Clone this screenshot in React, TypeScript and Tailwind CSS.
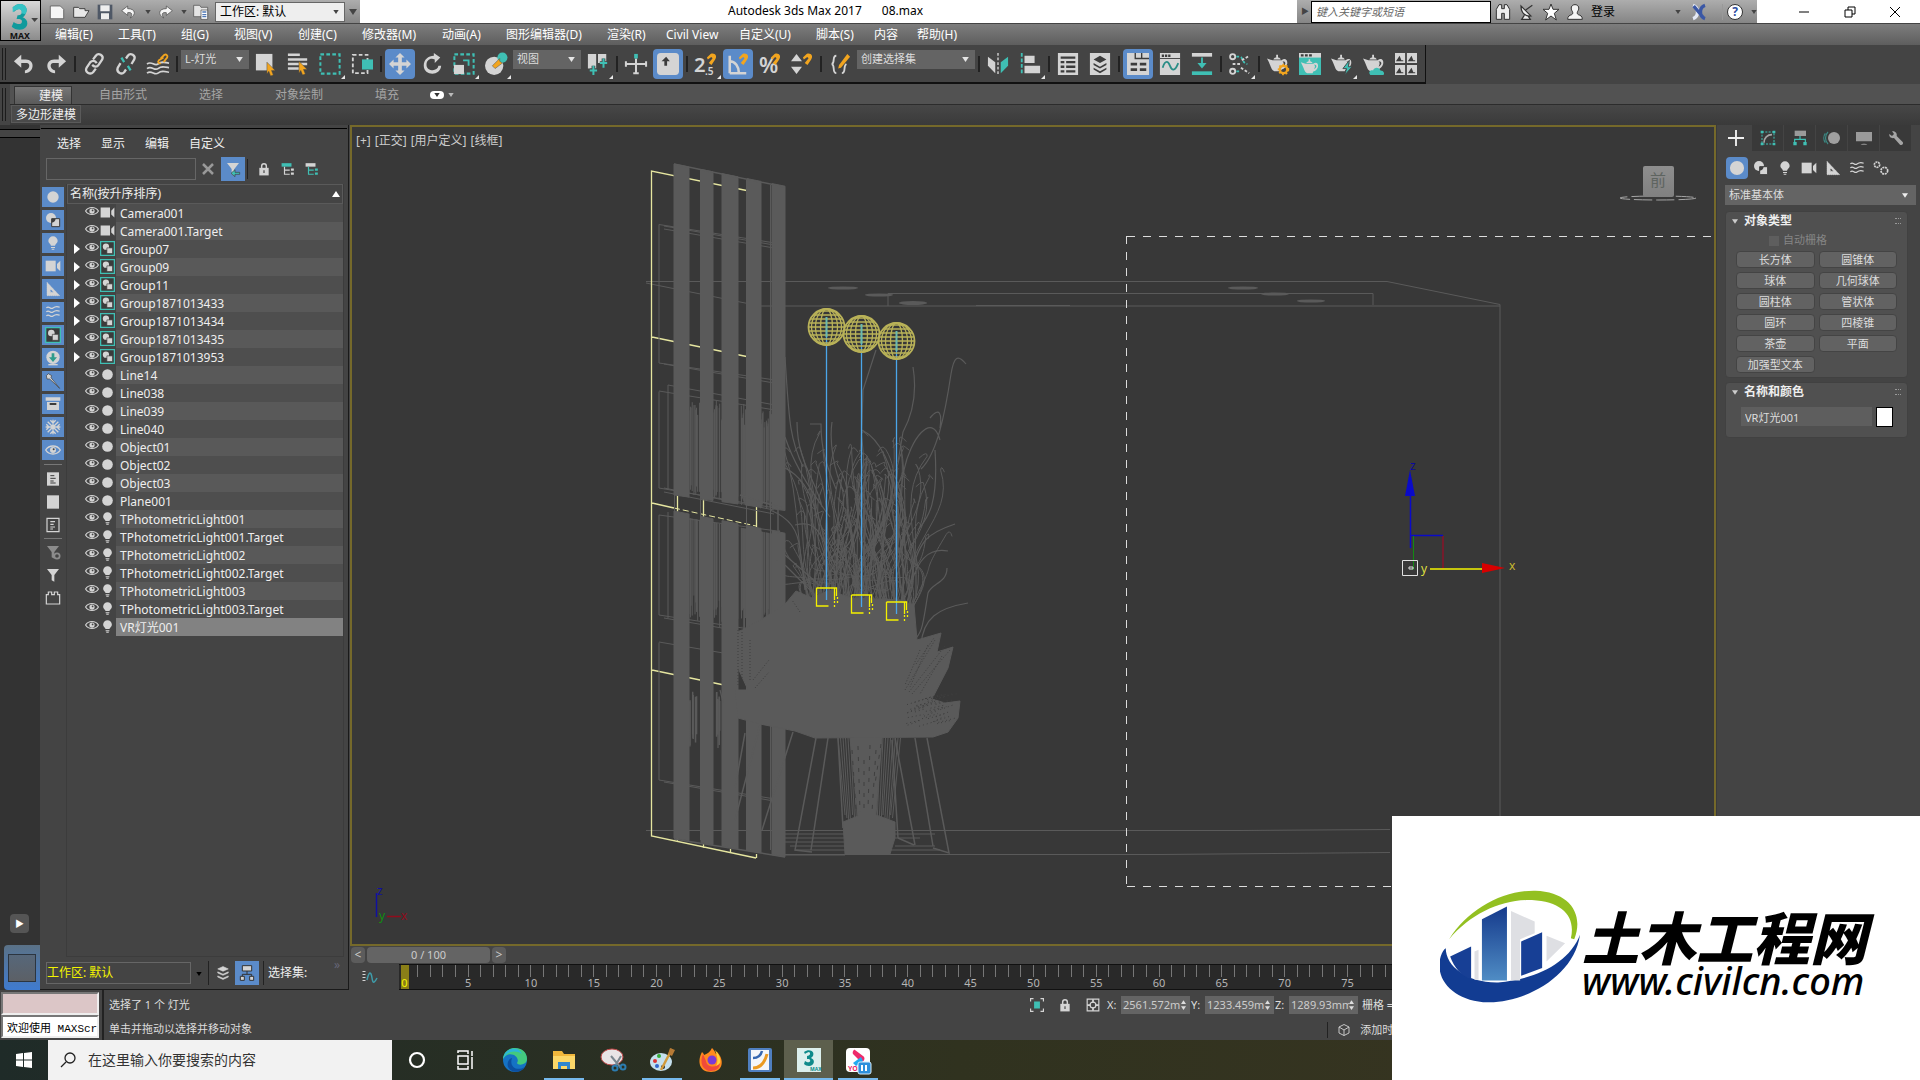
import React from 'react';

const L = '#d4d4d4';
const T = '#3fbfb4';
const O = '#f2a51f';

const bulb = <path d="M12 2a7 7 0 0 0-7 7c0 3 3 4 4 7h6c1-3 4-4 4-7a7 7 0 0 0-7-7zM9 18h6v1.500H9zM10 20.500h4V22h-4z" fill={L} />;
const camera = (
  <g fill={L}>
    <rect x="1" y="4" width="15" height="16" />
    <path d="M18 9l5-5v16l-5-5z" />
  </g>
);
const shapes = (
  <g>
    <circle cx="9" cy="9" r="7.500" fill={L} />
    <path d="M10 10h12v12H10z" fill={L} stroke="#3c3c3c" strokeWidth="1.500" />
    <path d="M10 10h6a7 7 0 0 1-6 6z" fill="#3c3c3c" />
  </g>
);
const waves = (
  <g fill="none" stroke={L} strokeWidth="1.800">
    <path d="M2 6c4-5 6 3 10 0s6-3 10-1M2 12c4-5 6 3 10 0s6-3 10-1M2 18c4-5 6 3 10 0s6-3 10-1" />
  </g>
);
const ruler = <path d="M3 2l19 20H3zM8 12v5h5z" fill={L} fillRule="evenodd" stroke={L} strokeDasharray="2 1" />;
const funnel = <path d="M3 3h18l-7 9v10l-4-2v-8z" fill={L} />;
const teapot = (
  <g>
    <path d="M0 6l6 2h10c3-3 7-1 6 4-1 3-3 5-6 6l-1 2H8c-4-2-3-5-8-14zM17 9c2 2 1 4 0 6 4-2 4-6 0-6z" fill={L} fillRule="evenodd" />
    <path d="M7 7c1-3 7-3 8 0zM10 2h2v3h-2z" fill={L} />
  </g>
);
const magnet = <path d="M13 5l4-4c4-2 8 2 5 6l-4 6-3-2 4-5c0-1-1-2-2-1l-3 2z" fill={O} />;
const lock = (
  <g>
    <rect x="4" y="10" width="16" height="13" fill={L} />
    <path d="M8 11V7a4 4 0 0 1 8 0v4" fill="none" stroke={L} strokeWidth="2.500" />
    <path d="M11 14h2v5h-2z" fill="#444" />
  </g>
);
const eye = (
  <g>
    <path d="M1 12c5-8 17-8 22 0-5 8-17 8-22 0z" fill="none" stroke={L} strokeWidth="2" />
    <circle cx="12" cy="12" r="4.500" fill={L} />
    <circle cx="13" cy="11" r="1.500" fill="#444" />
  </g>
);
const group = (
  <g>
    <path d="M1 1h22v22H1z" fill="#3b3b3b" stroke={T} strokeWidth="2" />
    <circle cx="9.500" cy="9" r="5" fill={L} />
    <path d="M11 11h9v9h-9z" fill={L} stroke="#3b3b3b" />
  </g>
);
const doc = (
  <g>
    <rect x="3" y="2" width="18" height="20" fill={L} />
    <path d="M8 7h6M8 11h8M8 15h5M8 18h8" stroke="#3c3c3c" strokeWidth="1.500" />
  </g>
);

const icons: Record<string, React.ReactNode> = {
  bulb, camera, shapes, waves, ruler, funnel, lock, eye, group, doc,
  circle: <circle cx="12" cy="12" r="8.500" fill={L} />,
  undo: <path d="M9 2L1 9l8 7v-5h6c4 0 4 7-2 8v3c11-1 11-15 1-15H9z" fill={L} />,
  redo: <path d="M15 2l8 7-8 7v-5H9c-4 0-4 7 2 8v3C0 21 0 7 10 7h5z" fill={L} />,
  link: (
    <g fill="none" stroke={L} strokeWidth="2.500">
      <path d="M11 7l3-4c3-4 9 0 7 4l-4 6c-2 3-5 2-7 0M14 17l-3 4c-3 3-10 0-7-5l4-6c2-2 5-2 7 1" />
    </g>
  ),
  unlink: (
    <g fill="none" strokeWidth="2.500">
      <path d="M12 6l2-3c3-4 9 0 7 4l-3 5M12 18l-2 3c-3 3-9 0-7-5l3-5" stroke={L} />
      <path d="M7 5l3 5M14 14l3 5" stroke={T} />
    </g>
  ),
  bind: (
    <g fill="none" stroke={L} strokeWidth="1.800">
      <path d="M0 12c5-4 8 3 12 0s7-2 12-1M0 17c5-4 8 3 12 0s7-2 12-1M0 22c5-4 8 3 12 0s7-2 12-1" />
      <path d="M15 6l4-4c2-1 4 1 3 3l-4 5M18 5l-5 3c-2 2 0 4 2 3" stroke={O} strokeWidth="2" />
    </g>
  ),
  select: (
    <g>
      <path d="M1 1h18v18H1z" fill={L} />
      <path d="M13 10l9 9h-4l2 5-3 1-2-5-2 3z" fill={O} stroke="#444" strokeWidth=".5" />
    </g>
  ),
  byName: (
    <g>
      <path d="M1 2h13M1 7h21M1 12h21M1 17h13" stroke={L} strokeWidth="2.800" />
      <path d="M13 9l9 9h-4l2 5-3 1-2-5-2 3z" fill={O} stroke="#444" strokeWidth=".5" />
    </g>
  ),
  region: <rect x="1.500" y="1.500" width="21" height="21" fill="none" stroke={T} strokeWidth="2.200" strokeDasharray="4 2.500" />,
  crossing: (
    <g>
      <rect x="2" y="2" width="16" height="20" fill="none" stroke={L} strokeWidth="2" strokeDasharray="4 2.500" />
      <rect x="12" y="7" width="12" height="11" fill={T} />
    </g>
  ),
  move: <path d="M12 0l5 5h-3v5h5V7l5 5-5 5v-3h-5v5h3l-5 5-5-5h3v-5H5v3l-5-5 5-5v3h5V5H7z" fill={L} />,
  rotate: <path d="M14 3V0l7 5-6 6V7c-5-2-9 1-9 6 0 7 12 8 13 1h3c-1 12-19 11-19 0 0-7 5-11 11-11z" fill={L} />,
  scale: (
    <g>
      <rect x="1.500" y="1.500" width="21" height="21" fill="none" stroke={T} strokeWidth="2.200" strokeDasharray="4 2.500" />
      <path d="M1 13h11v10H1z" fill={L} />
      <path d="M11 8h6v6" stroke={T} strokeWidth="2" fill="none" />
    </g>
  ),
  place: (
    <g>
      <circle cx="10" cy="14" r="10" fill={L} />
      <circle cx="19" cy="5" r="5.500" fill={T} />
      <path d="M8 14l8-8v3l3 2-8 6z" fill={O} stroke="#444" strokeWidth=".5" />
    </g>
  ),
  pivot: (
    <g>
      <path d="M1 1h9v16H1zM12 1h9v10h-9z" fill={L} />
      <path d="M7 14v10M3 19h8M18 6v10M14 11h8" stroke="#444" strokeWidth="4" />
      <path d="M7 14v10M3 19h8M18 6v10M14 11h8" stroke={T} strokeWidth="2.200" />
    </g>
  ),
  manipulate: (
    <g strokeWidth="2.200">
      <path d="M12 6v17M1 12h22" stroke={L} />
      <path d="M1 9v6M23 9v6M9 22h6" stroke={L} />
      <path d="M10 1h4v5h-4z" fill={T} />
    </g>
  ),
  keyboard: (
    <g>
      <rect x="0" y="0" width="24" height="24" rx="4" fill={L} />
      <path d="M8 14V9H5l5-5 4 5h-3v5z" fill="#3c3c3c" />
    </g>
  ),
  snap: (
    <g>
      <text x="-1" y="21" fontSize="22" fill={L} className="font-semibold">2</text>
      <text x="11" y="24" fontSize="11" fill={L} className="font-semibold">.5</text>
      {magnet}
    </g>
  ),
  angle: (
    <g>
      <path d="M3 22V3M3 22h18M3 9c6 0 10 6 10 13" fill="none" stroke={L} strokeWidth="2.800" />
      {magnet}
    </g>
  ),
  percent: (
    <g>
      <text x="0" y="22" fontSize="24" fill={L} className="font-semibold">%</text>
      {magnet}
    </g>
  ),
  spinner: (
    <g>
      <path d="M0 9l6-8 6 8zM0 15h12l-6 8z" fill={L} />
      {magnet}
    </g>
  ),
  sets: (
    <g>
      <path d="M8 3c-5 0-1 8-5 9 4 1 0 10 5 10M14 22c5 0 1-8 5-10" fill="none" stroke={L} strokeWidth="2" />
      <path d="M20 1l3 3-10 12-3 1 1-4z" fill={O} />
    </g>
  ),
  mirror: (
    <g>
      <path d="M1 4l8 6v12l-8-8z" fill={L} />
      <path d="M23 4l-8 6v12l8-8z" fill={T} />
      <path d="M12 0v24" stroke={L} strokeWidth="1.500" strokeDasharray="3 2" />
    </g>
  ),
  align: (
    <g>
      <path d="M3 0v24" stroke={T} strokeWidth="2" strokeDasharray="4 2" />
      <path d="M6 3h11v8H6zM6 14h17v8H6z" fill={L} />
    </g>
  ),
  sheet: (
    <g>
      <rect x="1" y="0" width="22" height="24" fill={L} />
      <path d="M4 5h16M4 10h4M10 10h10M4 15h4M10 15h10M4 20h4M10 20h10" stroke="#3c3c3c" strokeWidth="2.500" />
    </g>
  ),
  layers: (
    <g>
      <rect x="1" y="0" width="22" height="24" fill={L} />
      <path d="M12 3l7 4-7 4-7-4zM5 11l7 4 7-4v2l-7 4-7-4zM5 16l7 4 7-4v2l-7 4-7-4z" fill="#3c3c3c" />
    </g>
  ),
  ribbon: (
    <g>
      <rect x="0" y="0" width="24" height="24" fill={L} />
      <path d="M9 0v6h15M16 0v6" stroke="#3c3c3c" strokeWidth="1.500" fill="none" />
      <path d="M4 12h7M14 12h7M4 18h7M14 18h7" stroke="#3c3c3c" strokeWidth="3" />
    </g>
  ),
  curve: (
    <g>
      <rect x="1" y="0" width="22" height="24" fill={L} />
      <path d="M3 3h10" stroke="#3c3c3c" strokeWidth="2.500" strokeDasharray="2.500 1" />
      <path d="M1 6h22" stroke="#3c3c3c" />
      <path d="M4 16c3-9 6-7 8-2s5 7 9-3" stroke="#2a8d86" strokeWidth="2" fill="none" />
    </g>
  ),
  schematic: (
    <g>
      <path d="M1 0h22v4H1z" fill={L} />
      <path d="M1 20h22v4H1z" fill={T} />
      <path d="M11 5h2v6h4l-5 6-5-6h4z" fill={T} />
    </g>
  ),
  material: (
    <g fill="none" strokeWidth="2">
      <circle cx="4" cy="4" r="2.800" stroke={L} />
      <circle cx="4" cy="20" r="2.800" stroke={L} />
      <path d="M8 4h4c3 0 2 7 8 8M8 20h4" stroke={T} strokeDasharray="3 2" />
      <path d="M4 12h8M14 8l8-5M13 16l9 6" stroke={L} strokeDasharray="3 2" />
    </g>
  ),
  renderSetup: (
    <g>
      {teapot}
      <circle cx="18" cy="18" r="4" fill="none" stroke={O} strokeWidth="2.500" />
      <circle cx="18" cy="18" r="5.500" fill="none" stroke={O} strokeWidth="1.500" strokeDasharray="2 2" />
    </g>
  ),
  renderFrame: (
    <g>
      <rect x="0" y="0" width="24" height="24" fill={T} />
      <path d="M0 0h24v5H0z" fill={L} />
      <path d="M2 2.500h12" stroke="#3c3c3c" strokeWidth="2.500" strokeDasharray="3 1.500" />
      <g transform="translate(2 5) scale(.85)">{teapot}</g>
    </g>
  ),
  render: (
    <g>
      {teapot}
      <path d="M20 8l-7 9h4l-2 7 8-9h-4z" fill={T} stroke="#444" />
    </g>
  ),
  cloud: (
    <g>
      {teapot}
      <path d="M8 24c-3-4 1-6 3-5 1-4 7-4 8 0 4 0 5 4 3 5z" fill={T} />
    </g>
  ),
  gallery: (
    <g>
      <path d="M0 0h11v11H0zM13 0h11v11H13zM0 13h11v11H0zM13 13h11v11H13z" fill={L} />
      <path d="M1 9l4-6 2 5h2v1zM14 9l4-6 2 5h2v1zM1 22l4-6 2 5h2v1zM14 22l4-6 2 5h2v1z" fill="#3c3c3c" />
    </g>
  ),
  xref: (
    <g>
      <circle cx="12" cy="11" r="10" fill={L} />
      <path d="M10 5h4v6h4l-6 7-6-7h4z" fill="#2f9c8c" />
      <path d="M5 22h14" stroke={L} strokeWidth="2" />
    </g>
  ),
  bone: <path d="M5 1l5 3-1 3 13 16L7 9l-4 0-1-5z" fill={L} stroke="#3c3c3c" />,
  container: (
    <g>
      <path d="M1 2h22v5H1zM3 9h18v12H3z" fill={L} />
      <path d="M7 12h10" stroke="#3c3c3c" strokeWidth="3" />
    </g>
  ),
  snow: <path d="M12 1v22M1 12h22M4 4l16 16M20 4L4 20M8 2l4 4 4-4M8 22l4-4 4 4M2 8l4 4-4 4M22 8l-4 4 4 4" stroke={L} strokeWidth="2" fill="none" />,
  square: <rect x="3" y="2" width="18" height="20" fill={L} />,
  docOutline: <path d="M3 2h18v20H3zM8 7h7M8 11h5M8 15h7M8 18h4" stroke={L} strokeWidth="1.800" fill="none" />,
  funnelOff: (
    <g opacity=".5">
      {funnel}
      <circle cx="18" cy="18" r="4" fill="none" stroke={L} strokeWidth="2.500" />
    </g>
  ),
  brick: <path d="M2 21V7h3V3h5v4h4V3h5v4h3v14z" fill="none" stroke={L} strokeWidth="1.800" />,
  filterActive: (
    <g>
      {funnel}
      <path d="M22 17h-7v-4l-6 5.500 6 5V20h7z" fill={T} stroke="#3c3c3c" />
    </g>
  ),
  treeA: (
    <g>
      <path d="M1 2h17v6H1z" fill={T} />
      <path d="M6 8v13h9M6 14h9" stroke={L} strokeWidth="2" fill="none" />
      <path d="M17 11h5v4h-5zM17 18h5v4h-5z" fill={L} />
    </g>
  ),
  treeB: (
    <g>
      <path d="M1 2h17v6H1z" fill={L} />
      <path d="M6 8v13h9M6 14h9" stroke={T} strokeWidth="2" fill="none" />
      <path d="M17 11h5v4h-5zM17 18h5v4h-5z" fill={T} />
    </g>
  ),
  stack: <path d="M12 1l9 4-9 4-9-4zM3 10l9 4 9-4v2l-9 4-9-4zM3 17l9 4 9-4v2l-9 4-9-4z" fill={L} stroke={L} />,
  hierarchy: (
    <g stroke="#333" strokeWidth="1.500" fill={L}>
      <path d="M5 1h14v8H5z" />
      <path d="M12 9v5M5 17v-3h14v3" fill="none" />
      <path d="M2 17h6v6H2zM16 17h6v6h-6z" />
    </g>
  ),
  plus: <path d="M12 0v24M0 12h24" stroke="#f0f0f0" strokeWidth="2.800" />,
  modify: (
    <g>
      <rect x="3" y="3" width="18" height="18" fill="none" stroke={T} strokeWidth="1.500" strokeDasharray="3 2" />
      <path d="M1 1h4v4H1zM19 1h4v4h-4zM1 19h4v4H1zM19 19h4v4h-4z" fill={T} />
      <path d="M6 19c0-7 5-12 12-12" stroke="#a5a5a5" strokeWidth="2.500" fill="none" />
    </g>
  ),
  hier: (
    <g>
      <path d="M4 1h17v8H4z" fill="#9a9a9a" />
      <path d="M12 9v5M4 18v-4h16v4" stroke={T} fill="none" strokeWidth="1.800" />
      <path d="M2 18h5v5H2zM17 18h5v5h-5z" fill={T} />
    </g>
  ),
  motion: (
    <g>
      <circle cx="15" cy="12" r="9" fill="#a0a0a0" />
      <path d="M6 3c-5 5-5 13 0 18M2 5c-3 4-3 10 0 14" fill="none" stroke="#3b8a84" strokeWidth="1.800" />
    </g>
  ),
  display: <path d="M0 3h24v14H0zM7 22c2-2 8-2 10 0z" fill="#9a9a9a" />,
  wrench: <path d="M2 6l4 3 3-3-3-4c5-1 8 3 7 7l9 9c2 3-2 6-4 4l-9-10C5 13 1 10 2 6z" fill="#a5a5a5" />,
  gears: (
    <g fill="none" stroke={L} strokeWidth="2.500" strokeDasharray="3 1">
      <circle cx="6" cy="7" r="4" />
      <circle cx="17" cy="16" r="5" />
    </g>
  ),
  isolate: (
    <g>
      <path d="M1 6V1h5M18 1h5v5M23 18v5h-5M6 23H1v-5" fill="none" stroke={L} strokeWidth="2" />
      <rect x="7" y="6" width="10" height="12" fill={T} />
    </g>
  ),
  absolute: (
    <g fill="none" stroke={L} strokeWidth="2">
      <path d="M2 2h20v20H2z" />
      <circle cx="12" cy="12" r="5" />
      <path d="M12 2v6M12 16v6M2 12h6M16 12h6" strokeWidth="3" />
    </g>
  ),
  cube: <path d="M12 1l10 5v12l-10 5-10-5V6zM12 12v11M12 12L2 6M12 12l10-6" fill="none" stroke={L} strokeWidth="1.800" />,
  fileNew: <path d="M2 3h15l5 5v14H2z" fill="#f5f5f5" stroke="#444" />,
  fileOpen: <path d="M1 20V5h7l2 2h8v3h6l-6 10z" fill="#e8e8e8" stroke="#444" strokeWidth="1.500" />,
  fileSave: (
    <g>
      <path d="M1 1h22v22H1z" fill="#4f5866" />
      <path d="M5 2h14v9H5zM6 14h12v9H6z" fill="#eee" />
    </g>
  ),
  quickUndo: <path d="M10 3L1 10l9 7v-4c6-1 8 2 4 8 9-5 8-14-4-14z" fill="#f5f5f5" stroke="#444" />,
  quickRedo: <path d="M14 3l9 7-9 7v-4c-6-1-8 2-4 8-9-5-8-14 4-14z" fill="#f5f5f5" stroke="#444" />,
  project: (
    <g stroke="#444">
      <path d="M1 2h9l2 3h10v14H1z" fill="#e4e4e4" />
      <path d="M12 9h10v14H12z" fill="#fff" />
      <path d="M14 12h6M14 16h6M14 19h6" stroke="#4f78b5" strokeWidth="2" />
    </g>
  ),
  binoculars: <path d="M2 23V8l4-7h4v6h4V1h4l4 7v15h-8v-9h-4v9z" fill="#eee" stroke="#333" strokeWidth="1.500" />,
  dish: <path d="M3 3c0 11 7 16 15 15L3 3zM10 9l10-7M8 17l-4 6h13l-4-6" fill="#eee" stroke="#333" strokeWidth="1.800" />,
  star: <path d="M12 0l3 8h9l-7 6 3 10-8-6-8 6 3-10-7-6h9z" fill="#fff" stroke="#333" strokeWidth="1.500" />,
  user: <path d="M12 1c-6 0-7 6-4 10 1 2 1 4-1 5-3 1-6 2-6 7h22c0-5-3-6-6-7-2-1-2-3-1-5 3-4 2-10-4-10z" fill="#f5f5f5" stroke="#333" strokeWidth="1.500" />,
  exchange: (
    <g strokeWidth="5" fill="none">
      <path d="M3 2c9 3 9 17 0 20" stroke="#e4e9f5" />
      <path d="M21 2c-9 3-9 17 0 20M4 3l15 18" stroke="#3a57a5" />
    </g>
  ),
};

function Icon({ name, className = 'h-6 w-6' }: { name: string; className?: string }) {
  return (
    <svg viewBox="0 0 24 24" className={`shrink-0 overflow-visible ${className}`} aria-hidden="true">
      {icons[name]}
    </svg>
  );
}

function Caret({ className }: { className: string }) {
  return (
    <svg viewBox="0 0 8 6" className={className} aria-hidden="true">
      <path d="M0 0h8L4 6z" fill="currentColor" />
    </svg>
  );
}

const menus = [
  ['编辑(E)', 'w-[63px]'], ['工具(T)', 'w-[63px]'], ['组(G)', 'w-[53px]'], ['视图(V)', 'w-16'],
  ['创建(C)', 'w-16'], ['修改器(M)', 'w-20'], ['动画(A)', 'w-16'], ['图形编辑器(D)', 'w-[101px]'],
  ['渲染(R)', 'w-[59px]'], ['Civil View', 'w-[73px]'], ['自定义(U)', 'w-[77px]'], ['脚本(S)', 'w-[58px]'],
  ['内容', 'w-[43px]'], ['帮助(H)', 'w-12'],
];

function Header() {
  return (
    <header className="flex bg-gradient-to-b from-[#a2a2a2] to-[#5e5e5e]">
      <button aria-label="3ds Max" className="flex h-[41px] w-[41px] shrink-0 items-center border border-black bg-gradient-to-b from-[#d8d8d8] to-[#8c8c8c] text-[#333]">
        <svg viewBox="0 0 40 40" className="h-10 w-10">
          <path d="M12 6c8-8 18-1 13 7-1 2-2 3-3 3 8 3 6 13-3 13-3 0-6-1-8-3l2-5c5 4 10 2 8-2-1-1-3-1-5-1l1-4c4 1 6-4 3-6-2-1-5 1-7 3z" fill="#109a9c" />
          <path d="M12 6c8-8 18-1 13 7l-4-1c1-4-3-6-9-1z" fill="#36c3c5" />
          <text x="9" y="38" fontSize="9" fill="#111" className="font-bold">MAX</text>
          <path d="M31 17h7l-3.500 4z" fill="#444" />
        </svg>
      </button>
      <div className="min-w-0 flex-1">
        <div className="flex h-6 border-b border-[#444] bg-white text-xs text-black">
          <div className="flex w-[319px] items-center bg-gradient-to-b from-[#adadad] to-[#858585] pl-2 text-[#444]">
            <button aria-label="新建" className="w-6"><Icon name="fileNew" className="h-4 w-4" /></button>
            <button aria-label="打开" className="w-6"><Icon name="fileOpen" className="h-4 w-4" /></button>
            <button aria-label="保存" className="w-6"><Icon name="fileSave" className="h-4 w-4" /></button>
            <button aria-label="撤消" className="flex w-9 items-center gap-2"><Icon name="quickUndo" className="h-4 w-4" /><Caret className="h-1 w-1.5" /></button>
            <button aria-label="重做" className="flex w-9 items-center gap-2"><Icon name="quickRedo" className="h-4 w-4" /><Caret className="h-1 w-1.5" /></button>
            <button aria-label="项目" className="w-[22px]"><Icon name="project" className="h-4 w-4" /></button>
            <div className="relative h-5 w-[130px]">
              <select aria-label="工作区" className="block h-5 w-full appearance-none border border-[#666] bg-[#eee] px-1 text-xs leading-4 text-black">
                <option>工作区: 默认</option>
              </select>
              <Caret className="pointer-events-none absolute right-1.5 top-2 h-1 w-1.5" />
            </div>
            <Caret className="ml-1 h-2 w-2" />
          </div>
          <h1 className="flex flex-1 gap-5 pl-[368px] text-xs leading-[22px]">
            <span>Autodesk 3ds Max 2017</span>
            <span>08.max</span>
          </h1>
          <div className="flex w-[460px] items-center bg-gradient-to-b from-[#adadad] to-[#858585] text-[#444]">
            <span className="w-3.5 pl-1 text-[8px]">▶</span>
            <input aria-label="搜索" placeholder="键入关键字或短语" className="h-[22px] w-[180px] border border-black bg-white px-1 text-[11px] italic placeholder:text-[#666]" />
            <div className="flex items-center pl-1">
              {['binoculars', 'dish', 'star', 'user'].map((n) => (
                <button key={n} aria-label={n} className="flex w-6 justify-start"><Icon name={n} className="h-4 w-4" /></button>
              ))}
            </div>
            <button className="flex w-[100px] items-center justify-between text-xs text-black">登录<Caret className="mr-2.5 h-1 w-1.5 text-[#444]" /></button>
            <button aria-label="Exchange" className="flex w-8 border-r border-[#999]"><Icon name="exchange" className="h-4 w-4" /></button>
            <button aria-label="帮助" className="ml-1 flex items-center gap-2">
              <span className="h-4 w-4 rounded-full border border-[#333] bg-white text-center text-xs font-bold leading-[14px] text-[#2c4da0]">?</span>
              <Caret className="h-1 w-1.5" />
            </button>
          </div>
          <div className="ml-6 flex w-[139px] items-center justify-between pl-[17px] pr-[19px]">
            <button aria-label="最小化" className="w-3"><svg viewBox="0 0 12 12" className="h-3 w-3"><path d="M1 6h10" stroke="#000" /></svg></button>
            <button aria-label="还原" className="w-3"><svg viewBox="0 0 12 12" className="h-3 w-3"><path d="M1 4h7v7H1zM4 4V1h7v7H8" stroke="#000" fill="none" /></svg></button>
            <button aria-label="关闭" className="w-3"><svg viewBox="0 0 12 12" className="h-3 w-3"><path d="M1 1l10 10M11 1L1 11" stroke="#000" /></svg></button>
          </div>
        </div>
        <nav className="flex h-[21px] pl-3.5 text-xs leading-5 text-white">
          {menus.map(([label, width]) => (
            <button key={label} className={`${width} whitespace-nowrap text-left`}>{label}</button>
          ))}
        </nav>
      </div>
    </header>
  );
}

function Tool({ name, active, flyout }: { name: string; active?: boolean; flyout?: boolean }) {
  return (
    <button
      aria-label={name}
      className={`relative mx-px flex h-[30px] w-[30px] shrink-0 items-center justify-center rounded-sm ${active ? 'bg-[#5b8bc9]' : ''}`}
    >
      <Icon name={name} className="h-[22px] w-[22px]" />
      {flyout && <span className="absolute bottom-0 right-0 border-b-4 border-l-4 border-b-[#e8e8e8] border-l-transparent" />}
    </button>
  );
}

function Sep() {
  return <span className="mx-[2px] h-4 w-0.5 shrink-0 bg-[#222]" />;
}

function ToolSelect({ label, options, width }: { label: string; options: string[]; width: string }) {
  return (
    <div className={`relative mx-px mb-2 h-[19px] shrink-0 ${width}`}>
      <select aria-label={label} className="block h-[19px] w-full appearance-none bg-[#646464] px-1 text-[11px] text-[#ddd]">
        {options.map((o) => <option key={o}>{o}</option>)}
      </select>
      <Caret className="pointer-events-none absolute right-1.5 top-[7px] h-[5px] w-[7px] text-[#e5e5e5]" />
    </div>
  );
}

function Toolbar() {
  return (
    <div className="flex h-[39px] bg-[#444]">
      <div className="flex items-center border-b-2 border-r border-[#111] pr-[3px]">
        <span className="ml-0.5 mr-0.5 h-8 w-1 border-x border-[#1c1c1c]" />
        <Tool name="undo" /><Tool name="redo" /><Sep />
        <Tool name="link" /><Tool name="unlink" /><Tool name="bind" /><Sep />
        <ToolSelect label="选择过滤器" options={['L-灯光']} width="w-[68px]" />
        <Tool name="select" /><Tool name="byName" /><Tool name="region" flyout /><Tool name="crossing" /><Sep />
        <Tool name="move" active /><Tool name="rotate" /><Tool name="scale" flyout /><Tool name="place" flyout />
        <ToolSelect label="参考坐标系" options={['视图']} width="w-[68px]" />
        <Tool name="pivot" flyout /><Sep />
        <Tool name="manipulate" /><Tool name="keyboard" active /><Sep />
        <Tool name="snap" flyout /><Tool name="angle" active /><Tool name="percent" /><Tool name="spinner" /><Sep />
        <Tool name="sets" />
        <ToolSelect label="命名选择集" options={['创建选择集']} width="w-[118px]" />
        <Sep /><Tool name="mirror" /><Tool name="align" flyout /><Sep />
        <Tool name="sheet" /><Tool name="layers" /><Sep />
        <Tool name="ribbon" active /><Tool name="curve" /><Tool name="schematic" /><Sep />
        <Tool name="material" flyout /><Sep />
        <Tool name="renderSetup" /><Tool name="renderFrame" /><Tool name="render" flyout /><Tool name="cloud" /><Tool name="gallery" />
      </div>
    </div>
  );
}

function Ribbon() {
  return (
    <div className="flex h-[41px] bg-[#444] text-xs">
      <span className="mx-0.5 my-1 w-1 border-x border-[#1c1c1c]" />
      <div className="ml-0.5 flex-1">
        <div className="flex h-[21px] items-end border-b border-[#2c2c2c] bg-[#525252] pl-1 text-[#a5a5a5]">
          <button className="h-[18px] w-[58px] border border-b-0 border-[#333] bg-gradient-to-b from-[#777] to-[#5a5a5a] pl-4 leading-[18px] text-[#eee]">建模</button>
          <button className="h-[18px] w-[102px] leading-[18px]">自由形式</button>
          <button className="h-[18px] w-[74px] leading-[18px]">选择</button>
          <button className="h-[18px] w-[102px] leading-[18px]">对象绘制</button>
          <button className="h-[18px] w-[74px] leading-[18px]">填充</button>
          <button aria-label="显示" className="flex h-[18px] items-center gap-1 pl-1.5 text-[#bbb]">
            <span className="flex h-2 w-3.5 items-center justify-center rounded-sm bg-white text-[#333]"><Caret className="h-1 w-1.5" /></span>
            <Caret className="h-1 w-1.5" />
          </button>
        </div>
        <div className="flex h-5 bg-gradient-to-b from-[#474747] to-[#3a3a3a]">
          <button className="ml-px h-[18px] w-[70px] border border-[#5a5a5a] bg-[#4a4a4a] leading-[18px] text-[#eee]">多边形建模</button>
        </div>
      </div>
    </div>
  );
}

const nodes: { name: string; icon: string; group?: boolean }[] = [
  { name: 'Camera001', icon: 'camera' },
  { name: 'Camera001.Target', icon: 'camera' },
  { name: 'Group07', icon: 'group', group: true },
  { name: 'Group09', icon: 'group', group: true },
  { name: 'Group11', icon: 'group', group: true },
  { name: 'Group1871013433', icon: 'group', group: true },
  { name: 'Group1871013434', icon: 'group', group: true },
  { name: 'Group1871013435', icon: 'group', group: true },
  { name: 'Group1871013953', icon: 'group', group: true },
  { name: 'Line14', icon: 'circle' },
  { name: 'Line038', icon: 'circle' },
  { name: 'Line039', icon: 'circle' },
  { name: 'Line040', icon: 'circle' },
  { name: 'Object01', icon: 'circle' },
  { name: 'Object02', icon: 'circle' },
  { name: 'Object03', icon: 'circle' },
  { name: 'Plane001', icon: 'circle' },
  { name: 'TPhotometricLight001', icon: 'bulb' },
  { name: 'TPhotometricLight001.Target', icon: 'bulb' },
  { name: 'TPhotometricLight002', icon: 'bulb' },
  { name: 'TPhotometricLight002.Target', icon: 'bulb' },
  { name: 'TPhotometricLight003', icon: 'bulb' },
  { name: 'TPhotometricLight003.Target', icon: 'bulb' },
  { name: 'VR灯光001', icon: 'bulb' },
];

const filters = ['circle', 'shapes', 'bulb', 'camera', 'ruler', 'waves', 'group', 'xref', 'bone', 'container', 'snow', 'eye'];

function SceneExplorer() {
  return (
    <aside className="flex w-[309px] shrink-0 flex-col border-b border-r border-[#1a1a1a] bg-[#444] text-xs text-[#eee]">
      <div className="mx-px mt-[3px] flex h-[26px] items-end gap-5 border-t border-black pl-4">
        {['选择', '显示', '编辑', '自定义'].map((m) => <button key={m} className="leading-5">{m}</button>)}
      </div>
      <div className="mt-[3px] flex h-6 items-center pl-1.5">
        <input aria-label="查找" className="h-[22px] w-[150px] border border-[#666] bg-[#444]" />
        <button aria-label="清除" className="flex w-6 justify-center">
          <svg viewBox="0 0 12 12" className="h-3 w-3"><path d="M1 1l10 10M11 1L1 11" stroke="#999" strokeWidth="2.500" /></svg>
        </button>
        <button aria-label="过滤" className="ml-px flex h-6 w-6 items-center justify-center bg-[#5b8bc9]"><Icon name="filterActive" className="h-4 w-4" /></button>
        <span className="ml-0.5 mr-1 h-5 w-px bg-[#222]" />
        <button aria-label="锁定" className="flex w-6 justify-center"><Icon name="lock" className="h-3.5 w-3.5" /></button>
        <button aria-label="树" className="flex w-6 justify-center"><Icon name="treeA" className="h-3.5 w-3.5" /></button>
        <button aria-label="层" className="flex w-6 justify-center"><Icon name="treeB" className="h-3.5 w-3.5" /></button>
      </div>
      <div className="mt-[3px] flex flex-1">
        <div className="flex w-[26px] flex-col items-start gap-[3px] pl-0.5 pt-[3px]">
          {filters.map((f) => (
            <button key={f} aria-label={f} className="flex h-5 w-[22px] items-center justify-center bg-[#5b8bc9]">
              <Icon name={f} className="h-4 w-4" />
            </button>
          ))}
          <span className="my-px ml-0.5 h-px w-[18px] bg-[#777]" />
          {['doc', 'square', 'docOutline'].map((f) => (
            <button key={f} aria-label={f} className="flex h-5 w-[22px] items-center justify-center"><Icon name={f} className="h-4 w-4" /></button>
          ))}
          <span className="ml-0.5 h-px w-[18px] bg-[#777]" />
          {['funnelOff', 'funnel', 'brick'].map((f) => (
            <button key={f} aria-label={f} className="flex h-5 w-[22px] items-center justify-center"><Icon name={f} className="h-4 w-4" /></button>
          ))}
        </div>
        <div className="mr-1 flex-1 border border-t-0 border-[#3c3c3c]">
          <button className="flex h-5 w-full items-center justify-between border border-[#5a5a5a] pl-0.5 pr-0.5">
            名称(按升序排序)
            <Caret className="h-1.5 w-2 rotate-180 text-white" />
          </button>
          <ul>
            {nodes.map((n, i) => (
              <li key={n.name} className="flex h-[18px] items-center">
                <span className="flex w-[18px] justify-center pl-0.5">
                  {n.group && <svg viewBox="0 0 6 10" className="mr-px h-2.5 w-1.5"><path d="M0 0l6 5-6 5z" fill="#fff" /></svg>}
                </span>
                <Icon name="eye" className="mb-1 h-3.5 w-3.5" />
                <span className="mb-0.5 flex w-[17px] justify-center"><Icon name={n.icon} className="h-[15px] w-[15px]" /></span>
                <span className={`h-[18px] flex-1 pl-1 leading-[19px] ${i === 23 ? 'bg-[#828282]' : i % 2 ? 'bg-[#595959]' : 'bg-[#4e4e4e]'}`}>{n.name}</span>
              </li>
            ))}
          </ul>
        </div>
      </div>
      <div className="flex h-8 items-center pl-1.5">
        <div className="relative w-[160px]">
          <select aria-label="工作区" className="block h-[22px] w-[145px] appearance-none border border-[#666] bg-[#444] text-xs text-[#f4f400]">
            <option>工作区: 默认</option>
          </select>
          <Caret className="pointer-events-none absolute right-1 top-2.5 h-1 w-1.5 text-black" />
        </div>
        <span className="mx-0.5 h-6 w-px bg-[#222]" />
        <button aria-label="层" className="flex w-6 justify-center"><Icon name="stack" className="h-3.5 w-3.5" /></button>
        <button aria-label="层次" className="flex h-6 w-6 items-center justify-center bg-[#5b8bc9]"><Icon name="hierarchy" className="h-4 w-4" /></button>
        <span className="mx-1 h-6 w-px bg-[#222]" />
        <span>选择集:</span>
        <span className="ml-auto mr-2 mb-4 text-[#667]">»</span>
      </div>
    </aside>
  );
}

// small LCG so that the wireframe looks the same on every render
function makeRandom(seed: number) {
  let s = seed;
  return () => {
    s = (s * 1664525 + 1013904223) % 4294967296;
    return s / 4294967296;
  };
}

const rnd = makeRandom(17);

const strands = Array.from({ length: 130 }, () => {
  const x0 = 806 + rnd() * 108;
  const spread = (rnd() - 0.5) * 120;
  const top = 430 + rnd() * 120 + Math.abs(spread) * 0.4;
  const x1 = x0 + spread * 0.6;
  const bend = (rnd() - 0.5) * 80;
  return `M${x0} 606C${x0 + bend} ${560 - rnd() * 20} ${x1 - bend} ${top + 50} ${x1} ${top}q${(rnd() - 0.5) * 10} -6 ${(rnd() - 0.5) * 18} 2`;
}).join('');

// short dense hatching on the shelves between the slats
const shelfLines = Array.from({ length: 100 }, () => {
  const x = 688 + rnd() * 84;
  const slope = (x - 674) * 0.19;
  const y = 390 + rnd() * 22 + slope;
  return `M${x} ${y}V${482 + rnd() * 10 + slope}M${x} ${515 + slope}V${590 + rnd() * 30 + slope}`;
}).join('');

const footLines = Array.from({ length: 14 }, (_, i) => {
  const x = i < 8 ? 689 + rnd() * 10 : 714 + rnd() * 7;
  return `M${x} ${690 + rnd() * 12}V${730 + rnd() * 18}`;
}).join('');

const stemLines = Array.from({ length: 26 }, (_, i) => `M${838 + i * 2.5} 738L${845 + i * 1.9} ${815 + (i % 4) * 3}`).join('');

const bowlDots = Array.from({ length: 34 }, () => {
  const x = 906 + rnd() * 40;
  const y = 700 + rnd() * 28 - (x - 906) * 0.1;
  return `M${x} ${y}l${10 + rnd() * 10} ${-3 - rnd() * 3}`;
}).join('');

const planks = [[674, 689], [701, 713], [722, 738], [747, 761], [772, 785]];

function LightSphere({ x, y }: { x: number; y: number }) {
  return (
    <g transform={`translate(${x} ${y})`} fill="none" stroke="#b9b258" strokeWidth="1.300">
      <path d="M0 0v273" stroke="#4ba6ea" strokeWidth="1.300" />
      <circle r="18" strokeWidth="1.800" />
      <ellipse rx="15" ry="18" /><ellipse rx="11" ry="18" /><ellipse rx="6" ry="18" />
      <path d="M-18 0h36M-17 -4h34M-17 4h34M-16 -8h32M-16 8h32M-13 -12h26M-13 12h26M-8 -16h16M-8 16h16" />
      <path d="M0 -10v20" stroke="#69b9b0" strokeWidth="2" />
      <path d="M8 261v12M-10 261v18h12M-10 261h20v8" stroke="#f4f000" strokeWidth="1.300" />
      <path d="M8 274v6M11 270v8" stroke="#f4f000" strokeDasharray="2 2" />
    </g>
  );
}

function Scene() {
  return (
    <svg className="absolute inset-0 h-full w-full" aria-label="正交视口">
      <g transform="translate(-352 -127)" fill="none" stroke="#5a5a5a">
        <path d="M646 281.500H1387L1500 304.500V900M646 283L760 306H1500M888 306V293.500H1373V305M1070 305.500H976" />
        <path d="M646 830.500H1240l150-1M785 854.500H1160l230-2" />
        <g fill="#5a5a5a" stroke="none">
          <ellipse cx="843" cy="288" rx="15" ry="1.600" /><ellipse cx="879" cy="295" rx="14" ry="1.600" /><ellipse cx="913" cy="303" rx="14" ry="2" />
          <ellipse cx="1243" cy="288" rx="15" ry="1.600" /><ellipse cx="1275" cy="294" rx="14" ry="1.600" /><ellipse cx="1311" cy="301" rx="14" ry="1.600" />
        </g>

        {/* yellow plane behind the slats */}
        <path d="M749 191L651.500 171V836L756 858M652 337l97 20M652 503l22 5M652 670l72 15M677.500 842v-4M703.500 848v-4M730.500 853v-4M756.500 858v-4M677.500 495v17M703.500 494v23M756.500 505v23" stroke="#e6e6a0" strokeWidth="1.300" />
        <path d="M674 508l82 18" stroke="#e6e6a0" strokeDasharray="6 3" />
        <path d="M775 243L659 224.500V363L775 380M659 391.500V488L775 508M668 385V490M659 391L775 410M668 385L775 405M659 515V615L775 633M668 512V618M659 642.500V780L775 799M659 642L735 655M664 226l110 19M664 229l110 19M664 364l110 19M664 618l110 19M664 782l110 19M659 515l118 16M664 488l110 22M664 492l110 22" />
        <path d={shelfLines} />
        <path d={footLines} strokeWidth="1.500" />
        <path d="M674.500 165v674M700.500 170v670M746.500 180v670M770.500 185v665" />
        {planks.map(([a, b]) => {
          const s = (a - 674) * 0.2;
          const e = (b - 674) * 0.2;
          return (
            <path
              key={a}
              d={`M${a} ${164 + s}L${b} ${164 + e}V${495 + e * 0.7}L${a} ${495 + s * 0.7}zM${a} ${511 + s}L${b} ${511 + e}V${838 + e * 0.85}L${a} ${838 + s * 0.85}z`}
              fill="#5a5a5a"
            />
          );
        })}
        <path d="M674 164L785 187M674 839L785 857M740 495l45 14M778 510v24" strokeWidth="1.500" />

        {/* plant */}
        <path d={strands} />
        <path d="M785 357c4 60 4 80 18 110M876 350l-13 40-2 60M913 367c5 30-2 50-10 65l-5 30M966 364c-8-10-12-8-15 10-6 40-14 80-30 95M810 424h11c0 25 5 40 15 65M832 422c-3 20 2 50 12 70M862 430c20 10 30 40 34 60M930 418c10-12 12-4 10 10M785 437c10 30 30 60 45 80M797 422c0 40 20 60 25 85M785 468c20 10 28 30 32 50M940 440c-8-30-30 0-36 30-8 40-5 60-10 90M935 450c4 60-10 70-17 80M955 524c-30 10-34 20-39 34v40M948 551c-20-4-30 10-36 30M947 568c0 15-15 15-19 25-5 30-5 40-15 48M968 603c-30 5-45 15-47 42M770 510c20 8 28 20 30 40l5 40M785 555l40 35M785 565l30 30M795 525c20-5 25 5 40 40" strokeWidth="1.200" />
        <path
          d="M786 603L796 591 812 598 830 590 850 598 900 600 914 605 917 640 941 633 937 652 953 647 948 668 932 699 945 703 960 701 958 718 948 732 933 737 815 738 795 731 760 724 738 718 735 690 748 690 738 668V632L764 618z"
          fill="#5a5a5a"
        />
        <path d="M905 690l30-50M909 692l36-46M912 694l38-44M916 664l18-26M920 650l-15 35M928 645l-18 42M942 656l-22 38M738 630v56M742 626v54M750 640v40M753 680l16-20M755 688l14-16M800 612l-8-12" stroke="#3f3f3f" strokeDasharray="1 2" />
        <path d={bowlDots} stroke="#3f3f3f" strokeDasharray="1 3" />
        <path d={stemLines} />
        <path d="M850 738H882L876 815 895 822V838L890 854H845L843 822 858 816z" fill="#5a5a5a" />
        <path d="M852 750l4 60M858 746l2 66M864 760v50M870 745l-2 64M876 750l-4 62M881 744l-6 40" stroke="#3f3f3f" strokeDasharray="4 7" />
        <path d="M793 732l-31 98M745 733l-10 55M816 738l-21 112 17 2M828 738l-17 112M915 738l18 108M927 738l22 115-16-5M895 738l20 107M892 740l6 98M838 738l5 90M760 725l-25 95M898 838l16 7" strokeWidth="1.500" />
        <path d="M785 834h60M785 838h60M785 842h60M790 846h60M795 850h50M785 855h60M895 834h40M890 838h30M895 846h40M890 850h50M720 690l3 12v45M690 700v45M718 700v48" strokeWidth="1.200" />

        <LightSphere x={826.500} y={327} />
        <LightSphere x={861.500} y={334} />
        <LightSphere x={896.500} y={341} />

        {/* camera safe frame */}
        <path d="M1127 236.500H1714M1126.500 236V887M1127 886.500H1714" stroke="#dcdcdc" strokeDasharray="8 8" />

        {/* move gizmo */}
        <path d="M1410.500 548V495M1411 535.500h32" stroke="#0a0ac8" strokeWidth="1.500" />
        <path d="M1410 470l-5 26h10z" fill="#0a0ac8" stroke="none" />
        <path d="M1413.500 536v34" stroke="#128a12" />
        <path d="M1443 536v33" stroke="#b00020" />
        <path d="M1402.500 560.500h15v15h-15zM1409 567h4v2h-4z" stroke="#e0e0e0" />
        <path d="M1430 569h52" stroke="#f4f400" strokeWidth="1.500" />
        <path d="M1482 563v10l23-5z" fill="#d80000" stroke="none" />
        <g stroke="none" fontSize="12">
          <text x="1410" y="470" fill="#0a0a9c">z</text>
          <text x="1421" y="573" fill="#dede40">y</text>
          <text x="1509" y="570" fill="#c8b830">x</text>
          <text x="377" y="895" fill="#1010a0">z</text>
          <text x="379" y="920" fill="#109010">y</text>
          <text x="401" y="920" fill="#900c1c">x</text>
        </g>
        <path d="M376.500 893v24" stroke="#1010a0" strokeWidth="1.500" />
        <path d="M387 916.500h14" stroke="#900c1c" strokeWidth="1.500" />
      </g>
    </svg>
  );
}

function ViewCube() {
  return (
    <svg viewBox="0 0 80 40" className="absolute right-[15px] top-[37px] h-10 w-20" aria-label="前">
      <defs>
        <linearGradient id="cube-face" x1="0" y1="0" x2="0" y2="1">
          <stop offset="0" stopColor="#8e8e8e" />
          <stop offset="1" stopColor="#808080" />
        </linearGradient>
      </defs>
      <ellipse cx="39" cy="34" rx="38" ry="2" fill="none" stroke="#a5a5a5" strokeDasharray="18 4" />
      <rect x="24" y="2" width="31" height="31" rx="2" fill="url(#cube-face)" />
      <text x="31" y="22" fontSize="16" fill="#5e6460">前</text>
    </svg>
  );
}

function Timeline() {
  return (
    <div className="bg-[#444] text-xs text-[#ccc]">
      <div className="flex h-[18px] items-start gap-0.5 pl-px pt-px">
        <button className="h-4 w-3.5 rounded-sm bg-[#5c5c5c] leading-4">&lt;</button>
        <button className="h-4 w-[123px] rounded-sm bg-[#646464] text-[11px] leading-4">0 / 100</button>
        <button className="h-4 w-3.5 rounded-sm bg-[#5c5c5c] leading-4">&gt;</button>
      </div>
      <div className="flex h-[26px]">
        <button aria-label="迷你曲线编辑器" className="flex w-[49px] items-center pl-3">
          <svg viewBox="0 0 16 14" className="h-3.5 w-4 shrink-0 overflow-visible">
            <path d="M2 1v12" stroke={L} strokeWidth="3" strokeDasharray="1 2" />
            <path d="M5 10c2-9 4-9 5-2s3 4 5 0" fill="none" stroke="#3f9dab" strokeWidth="1.500" />
          </svg>
        </button>
        <div className="flex flex-1 border-y border-[#111] bg-[#292929] pr-12">
          {Array.from({ length: 101 }, (_, i) => (
            <div key={i} className="flex min-w-0 flex-1 flex-col items-center">
              {i === 0 ? (
                <span className="h-6 w-2 bg-[#8a7f18] pt-3 text-[11px] leading-3 text-[#f4f400]">0</span>
              ) : (
                <span className="h-3 w-px shrink-0 bg-[#777]" />
              )}
              {i > 0 && i <= 75 && i % 5 === 0 && <span className="text-[11px] leading-3 text-[#b5b5b5]">{i}</span>}
            </div>
          ))}
        </div>
      </div>
    </div>
  );
}

function Viewport() {
  return (
    <main className="flex min-w-0 flex-1 flex-col bg-[#444] pl-px">
      <div className="relative flex-1 overflow-hidden border-2 border-[#75692a] bg-[#383838]">
        <Scene />
        <div className="relative flex gap-1 pl-1 pt-1.5 text-xs leading-4 text-[#ccc]">
          <button>[+]</button><button>[正交]</button><button>[用户定义]</button><button>[线框]</button>
        </div>
        <ViewCube />
      </div>
      <Timeline />
    </main>
  );
}

function Rollout({ title, children }: { title: string; children: React.ReactNode }) {
  return (
    <section className="rounded-sm border border-[#414141] bg-[#505050]">
      <h2 className="flex h-[18px] items-center pl-1.5 pr-1.5 text-xs font-bold text-[#eee]">
        <Caret className="mr-1.5 h-[5px] w-1.5 text-[#ccc]" />
        {title}
        <span className="ml-auto h-1.5 w-1.5 border-y border-dotted border-[#999]" />
      </h2>
      {children}
    </section>
  );
}

function CommandPanel() {
  return (
    <aside className="w-[204px] shrink-0 border-l border-[#3a3a3a] bg-[#444] text-[11px] text-[#ddd]">
      <div className="flex h-[26px] pl-[3px]">
        {['plus', 'modify', 'hier', 'motion', 'display', 'wrench'].map((t, i) => (
          <button key={t} aria-label={t} className={`flex w-8 items-center justify-center border-r border-[#444] ${i ? 'bg-[#393939]' : ''}`}>
            <Icon name={t} className="h-4 w-4" />
          </button>
        ))}
      </div>
      <div className="flex gap-0.5 py-1.5 pl-[9px]">
        {['circle', 'shapes', 'bulb', 'camera', 'ruler', 'waves', 'gears'].map((t, i) => (
          <button key={t} aria-label={t} className={`flex h-[22px] w-[22px] items-center justify-center rounded-sm ${i ? '' : 'bg-[#5b8bc9]'}`}>
            <Icon name={t} className={i ? 'h-4 w-4' : 'h-5 w-5'} />
          </button>
        ))}
      </div>
      <div className="relative ml-2 mr-1">
        <select aria-label="类别" className="block h-5 w-full appearance-none bg-[#646464] px-1 text-[11px] text-[#ddd]">
          <option>标准基本体</option>
        </select>
        <Caret className="pointer-events-none absolute right-2 top-2 h-[5px] w-1.5 text-[#eee]" />
      </div>
      <div className="mt-1.5 flex flex-col gap-1 pl-2 pr-3">
        <Rollout title="对象类型">
          <label className="flex h-[21px] items-center gap-1 pl-[43px] text-[#858585]">
            <input type="checkbox" disabled className="h-2.5 w-2.5 appearance-none bg-[#5e5e5e]" />
            自动栅格
          </label>
          <div className="grid grid-cols-2 gap-x-1 gap-y-1 px-2.5 pb-1">
            {['长方体', '圆锥体', '球体', '几何球体', '圆柱体', '管状体', '圆环', '四棱锥', '茶壶', '平面', '加强型文本'].map((b) => (
              <button key={b} className="h-[17px] rounded-sm border border-[#444] bg-[#626262] leading-[15px]">{b}</button>
            ))}
          </div>
        </Rollout>
        <Rollout title="名称和颜色">
          <div className="flex h-9 items-start gap-1 pl-[15px] pt-1.5">
            <input aria-label="名称" defaultValue="VR灯光001" className="h-[19px] w-[131px] bg-[#5e5e5e] px-1 text-[11px]" />
            <button aria-label="颜色" className="h-5 w-[17px] border border-black bg-white" />
          </div>
        </Rollout>
      </div>
    </aside>
  );
}

function Coord({ axis, value }: { axis: string; value: string }) {
  return (
    <label className="flex items-center gap-1">
      <span className="w-2.5">{axis}:</span>
      <span className="flex h-[18px] w-[69px] items-center bg-[#646464] pr-1">
        <input defaultValue={value} className="w-0 flex-1 bg-transparent pl-0.5 text-[11px] text-[#ccc]" />
        <span className="flex flex-col gap-0.5">
          <Caret className="h-1 w-[5px] rotate-180" />
          <Caret className="h-1 w-[5px]" />
        </span>
      </span>
    </label>
  );
}

function StatusBar() {
  return (
    <footer className="flex h-[50px] bg-[#444] text-[11px] text-[#ddd]">
      <div className="w-[104px] shrink-0 border-r-2 border-[#222] pl-px pt-0.5">
        <div className="h-[23px] w-[98px] border-2 border-[#eee] border-t-[#777] border-l-[#777] bg-[#dcc6c7]" />
        <input aria-label="MAXScript" defaultValue="欢迎使用 MAXScr" className="block h-[23px] w-[98px] border-2 border-[#eee] border-t-[#777] border-l-[#777] bg-white pl-1 font-['Liberation_Mono','Noto_Sans_CJK_SC',monospace] text-[11px] text-black" />
      </div>
      <div className="flex w-[919px] flex-col gap-2 pl-[5px] pt-[7px] leading-4">
        <p>选择了 1 个 灯光</p>
        <p>单击并拖动以选择并移动对象</p>
      </div>
      <div className="leading-4">
        <div className="flex h-[29px] items-center">
          <button aria-label="孤立当前选择" className="flex w-7 justify-center"><Icon name="isolate" className="h-3.5 w-3.5" /></button>
          <button aria-label="选择锁定" className="flex w-7 justify-center"><Icon name="lock" className="h-3.5 w-3.5" /></button>
          <button aria-label="绝对模式" className="flex w-7 justify-center"><Icon name="absolute" className="h-3.5 w-3.5" /></button>
          <div className="flex gap-px">
            <Coord axis="X" value="2561.572m" />
            <Coord axis="Y" value="1233.459m" />
            <Coord axis="Z" value="1289.93mm" />
          </div>
          <span className="ml-1 whitespace-nowrap">栅格 =</span>
        </div>
        <div className="flex h-[21px] items-center justify-end gap-2.5">
          <span className="h-4 w-px bg-[#222]" />
          <Icon name="cube" className="h-3 w-3" />
          <span>添加时</span>
        </div>
      </div>
    </footer>
  );
}

const apps: { name: string; running?: boolean; active?: boolean; art: React.ReactNode }[] = [
  { name: 'Cortana', art: <circle cx="16" cy="16" r="7" fill="none" stroke="#fff" strokeWidth="2.200" /> },
  { name: '任务视图', art: <path d="M8 12h10v8H8zM8 9V7h10v3M8 22v3h10v-3M22 7v5M22 15v10M21 14h2" fill="none" stroke="#fff" strokeWidth="1.500" /> },
  {
    name: 'Edge',
    art: (
      <g>
        <circle cx="16" cy="16" r="12" fill="#1572c4" />
        <path d="M4 15C5 0 28 1 28 15c0 6-9 7-10 4 4-6-8-14-14-4z" fill="#43c97f" />
        <path d="M4 15C6 3 20 2 23 10 15 5 8 8 4 15z" fill="#2bb5da" />
        <path d="M13 14c-3 8 4 14 13 9-6 9-20 4-17-5 1-3 3-4 4-4z" fill="#0c4fa0" />
      </g>
    ),
  },
  {
    name: '文件资源管理器',
    running: true,
    art: (
      <g>
        <path d="M5 7h9l2 3h11v15H5z" fill="#f0b73c" />
        <path d="M5 12h22v13H5z" fill="#fbd768" />
        <path d="M10 25v-7h12v7h-3v-3h-6v3z" fill="#2f86cf" />
      </g>
    ),
  },
  {
    name: '截图工具',
    art: (
      <g>
        <ellipse cx="15" cy="13" rx="11" ry="8" fill="#e8e4e6" stroke="#c04848" />
        <path d="M14 12l10 12M24 12l-6 10" stroke="#7b8790" strokeWidth="2" />
        <circle cx="18" cy="24" r="2.500" fill="none" stroke="#2c7cb0" strokeWidth="2" /><circle cx="26" cy="23" r="2.500" fill="none" stroke="#2c7cb0" strokeWidth="2" />
      </g>
    ),
  },
  {
    name: '画图',
    running: true,
    art: (
      <g>
        <ellipse cx="15" cy="18" rx="11" ry="9" fill="#c5e0ee" />
        <circle cx="9" cy="17" r="2" fill="#d33" /><circle cx="13" cy="12" r="2" fill="#3a3" /><circle cx="11" cy="22" r="2" fill="#36c" /><circle cx="17" cy="23" r="2" fill="#222" />
        <path d="M26 5L15 26" stroke="#d19a3b" strokeWidth="2.500" /><path d="M24 4l5 2-3 6-4-2z" fill="#b77a35" />
      </g>
    ),
  },
  {
    name: 'Firefox',
    art: (
      <g>
        <path d="M17 4c3 3 3 4 4 6 1 0 1-1 1-2 8 8 6 20-6 20C4 28 2 17 7 8c1 1 2 2 2 3 3-1 6-3 8-7z" fill="#ff8a1e" />
        <path d="M20 6c8 8 7 18-3 21 6-5 7-11 3-21z" fill="#ffd23c" />
        <path d="M8 10c-4 9 0 17 8 17 5 0 9-3 9-8-3 5-13 5-14-2z" fill="#f04a3a" />
        <circle cx="17" cy="16" r="4.500" fill="#7a3bd6" />
      </g>
    ),
  },
  {
    name: 'CAD',
    running: true,
    art: (
      <g>
        <rect x="4" y="4" width="24" height="24" rx="2" fill="#4f7fc0" />
        <rect x="7" y="6" width="18" height="20" fill="#f4f6fa" />
        <path d="M9 14c6 0 8-3 9-7" fill="none" stroke="#3767b0" strokeWidth="2.500" />
        <path d="M9 24c8 0 12-6 14-14" fill="none" stroke="#eb9a22" strokeWidth="3" />
      </g>
    ),
  },
  {
    name: '3ds Max',
    running: true,
    active: true,
    art: (
      <g>
        <rect x="4" y="4" width="24" height="24" fill="#dcefed" />
        <path d="M11 8c6-4 11 0 9 4l-2 2c5 2 3 8-2 8-2 0-4-1-5-2l1-3c4 3 7 0 4-2h-2v-3c3 0 4-3 2-4-1 0-3 1-4 2z" fill="#0f8a8a" />
        <text x="17" y="27" fontSize="5" fill="#0f8a8a" className="font-bold">MAX</text>
      </g>
    ),
  },
  {
    name: '优酷',
    running: true,
    art: (
      <g>
        <rect x="4" y="4" width="24" height="24" rx="4" fill="#fff" />
        <path d="M13 6l8 6c3 2 1 6-2 6l-8-8c-1-2 1-5 2-4z" fill="#ee2a6b" />
        <path d="M19 13l-8 6 3 3 7-5z" fill="#22aaf0" />
        <text x="6" y="27" fontSize="7" fill="#ee2a6b" className="font-bold">YOU</text>
        <rect x="16" y="18" width="13" height="12" rx="2" fill="#2e90dc" stroke="#d5ebfa" />
        <path d="M20 21v6M24 21v6" stroke="#fff" strokeWidth="2" />
      </g>
    ),
  },
];

function Taskbar() {
  return (
    <div className="flex h-10 bg-gradient-to-r from-[#1f2b28] via-[#30321f] to-[#3b3622]">
      <button aria-label="开始" className="flex w-12 items-center justify-center">
        <svg viewBox="0 0 16 16" className="h-4 w-4"><path d="M0 2l7-1v6.500H0zM8 1l8-1v7.500H8zM0 8.500h7V15l-7-1zM8 8.500h8V16l-8-1z" fill="#fff" /></svg>
      </button>
      <label className="flex w-[344px] items-center gap-3 bg-[#f2f2f2] pl-3">
        <svg viewBox="0 0 16 16" className="h-4 w-4 shrink-0"><circle cx="10" cy="6" r="5" fill="none" stroke="#222" strokeWidth="1.300" /><path d="M6 10l-5 5" stroke="#222" strokeWidth="1.300" /></svg>
        <input aria-label="搜索" placeholder="在这里输入你要搜索的内容" className="flex-1 bg-transparent text-sm placeholder:text-[#333]" />
      </label>
      {apps.map((a) => (
        <button key={a.name} aria-label={a.name} className={`flex w-[49px] flex-col items-center justify-between pt-1 ${a.active ? 'bg-[#5d5f4d]' : ''}`}>
          <svg viewBox="0 0 32 32" className="h-8 w-8">{a.art}</svg>
          {a.running && <span className={`h-0.5 bg-[#76b9ed] ${a.active ? 'w-full' : 'w-10'}`} />}
        </button>
      ))}
    </div>
  );
}

function Watermark() {
  return (
    <div className="absolute bottom-0 right-0 flex h-[264px] w-[528px] items-start bg-white pl-12 pt-[74px] text-black">
      <svg viewBox="148 240 414 340" preserveAspectRatio="none" className="h-[113px] w-[140px] shrink-0">
        <defs>
          <linearGradient id="tower" x1="0" y1="0" x2="0" y2="1">
            <stop offset="0" stopColor="#153a8c" />
            <stop offset="1" stopColor="#4f8cc4" />
          </linearGradient>
        </defs>
        <path d="M175 388C230 300 330 240 430 242 530 246 575 310 545 388L535 385C550 320 510 275 420 270 330 268 240 310 175 388z" fill="#93c021" />
        <path d="M165 415C165 470 230 520 320 518 430 510 530 460 562 375 545 500 400 580 290 578 190 575 130 510 150 440 155 425 160 418 165 415z" fill="#123c92" />
        <path d="M358 303l70 32v35l-43 18v124h-27zM463 378l55 22-55 55zM250 425l12-5v90h-12z" fill="#dedfe3" />
        <path d="M272 328l74-38v222h-74z" fill="url(#tower)" />
        <path d="M388 395l62-28v108l-62 23zM178 440l62-30v98c-30-10-50-35-62-68z" fill="#173f95" />
      </svg>
      <div className="pt-4">
        <p className="pl-0.5 text-[57px] font-black italic leading-[64px]">土木工程网</p>
        <p className="-mt-3 pl-0.5 font-['Noto_Sans',sans-serif] text-[38px] font-medium italic leading-[44px]">www.civilcn.com</p>
      </div>
    </div>
  );
}

export default function App() {
  return (
    <div className="relative flex min-h-screen flex-col overflow-hidden bg-[#333] font-['Noto_Sans','Noto_Sans_CJK_SC',sans-serif]">
      <Header />
      <Toolbar />
      <Ribbon />
      <div className="flex flex-1">
        <div className="flex w-10 shrink-0 flex-col items-end bg-[#333]">
          <div className="mt-1 h-[9px] w-full border-b border-t border-black bg-[#444]" />
          <button aria-label="展开" className="mr-[11px] mt-auto flex h-[19px] w-[19px] items-center justify-center rounded-sm bg-[#555] text-[9px] text-white">▶</button>
          <button aria-label="视口布局" className="mt-3 h-[45px] w-9 rounded-l-sm bg-gradient-to-b from-[#5a7186] to-[#3f7bd0] p-1">
            <span className="block h-7 border border-[#2c3540] bg-gradient-to-b from-[#56677a] to-[#5c6066]" />
          </button>
        </div>
        <SceneExplorer />
        <Viewport />
        <CommandPanel />
      </div>
      <StatusBar />
      <Taskbar />
      <Watermark />
    </div>
  );
}
